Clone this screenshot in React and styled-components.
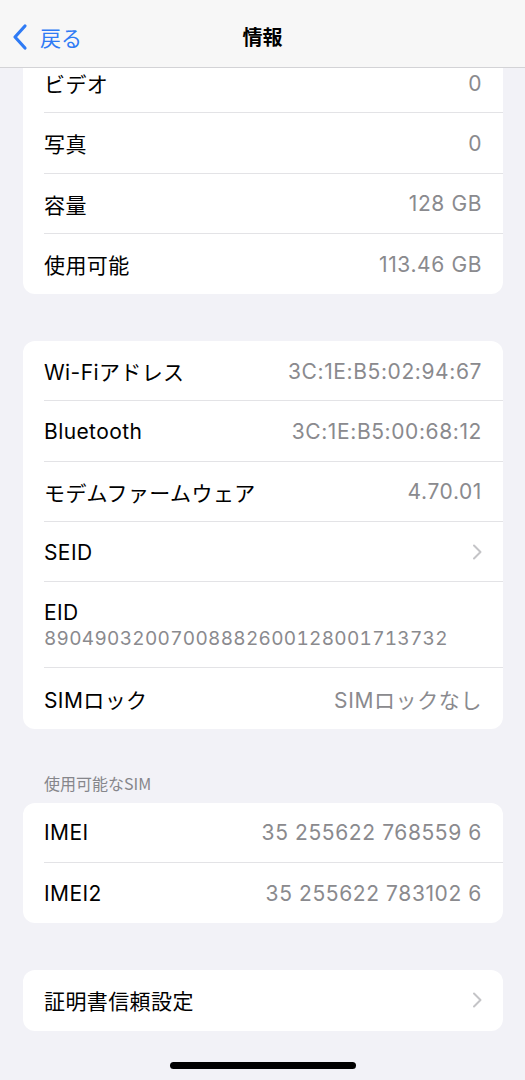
import React from "react";
import styled, { createGlobalStyle } from "styled-components";

const GlobalStyle = createGlobalStyle`
  html, body {
    margin: 0;
    padding: 0;
    background: #f2f2f7;
  }
  body {
    font-family: "Inter", "Noto Sans CJK JP", sans-serif;
    -webkit-font-smoothing: antialiased;
  }
`;

const Screen = styled.div`
  position: relative;
  width: 525px;
  height: 1080px;
  overflow: hidden;
  background: #f2f2f7;
`;

const NavBar = styled.div`
  position: absolute;
  top: 0;
  left: 0;
  right: 0;
  height: 67px;
  background: #f7f7f7;
  border-bottom: 1px solid #d3d3d6;
  z-index: 2;
`;

const BackButton = styled.div`
  position: absolute;
  left: 11px;
  top: 22px;
  display: flex;
  align-items: center;
  gap: 11px;
  color: #2f7bf5;
  font-size: 21px;
  font-family: "Noto Sans CJK JP", sans-serif;
`;

const NavTitle = styled.div`
  position: absolute;
  left: 0;
  right: 0;
  top: 22px;
  text-align: center;
  font-size: 20px;
  font-weight: 700;
  color: #000;
  font-family: "Noto Sans CJK JP", sans-serif;
`;

const Content = styled.div`
  display: flex;
  flex-direction: column;
  padding: 53px 22px 0 23px;
`;

const Card = styled.div`
  background: #fff;
  border-radius: 12px;
  overflow: hidden;
  margin-bottom: ${(p) => p.$gap || 0}px;
`;

const Row = styled.div`
  position: relative;
  display: flex;
  align-items: center;
  justify-content: space-between;
  height: ${(p) => p.$h || 60.3}px;
  padding: 0 21px 0 21px;
  box-sizing: border-box;

  &:not(:last-child)::after {
    content: "";
    position: absolute;
    left: 21px;
    right: 0;
    bottom: 0;
    height: 1px;
    background: #e3e3e6;
  }
`;

const StackRow = styled(Row)`
  flex-direction: column;
  align-items: flex-start;
  justify-content: center;
  gap: 2px;
`;

const Label = styled.span`
  font-size: 21px;
  color: #000;
  letter-spacing: 0.4px;
`;

const Value = styled.span`
  font-size: 21px;
  color: #8a8a8e;
  letter-spacing: 0.6px;
`;

const MonoValue = styled.span`
  font-size: 19px;
  color: #8a8a8e;
  font-variant-numeric: tabular-nums;
  letter-spacing: 0.3px;
`;

const SectionHeader = styled.div`
  font-size: 16px;
  line-height: 20px;
  color: #86868b;
  padding: 0 0 10px 21px;
  font-family: "Noto Sans CJK JP", sans-serif;
`;

const HomeBar = styled.div`
  align-self: center;
  width: 186px;
  height: 7px;
  border-radius: 4px;
  background: #000;
  margin-top: 31px;
  margin-left: -1px;
`;

const Chevron = ({ color = "#c4c4c7", w = 10, h = 16, sw = 2 }) => (
  <svg width={w} height={h} viewBox="0 0 10 16" fill="none">
    <path
      d="M2 1.5 L8.5 8 L2 14.5"
      stroke={color}
      strokeWidth={sw}
      strokeLinecap="round"
      strokeLinejoin="round"
    />
  </svg>
);

const BackChevron = () => (
  <svg width="18" height="28" viewBox="0 0 18 28" fill="none">
    <path
      d="M14 3 L4 14 L14 25"
      stroke="#2f7bf5"
      strokeWidth="3.2"
      strokeLinecap="round"
      strokeLinejoin="round"
    />
  </svg>
);

const App = () => {
  return (
    <>
      <GlobalStyle />
      <Screen>
        <NavBar>
          <BackButton>
            <BackChevron />
            <span>戻る</span>
          </BackButton>
          <NavTitle>情報</NavTitle>
        </NavBar>

        <Content>
          <Card $gap={47}>
            <Row>
              <Label>ビデオ</Label>
              <Value>0</Value>
            </Row>
            <Row>
              <Label>写真</Label>
              <Value>0</Value>
            </Row>
            <Row>
              <Label>容量</Label>
              <Value>128 GB</Value>
            </Row>
            <Row>
              <Label>使用可能</Label>
              <Value>113.46 GB</Value>
            </Row>
          </Card>

          <Card $gap={44}>
            <Row>
              <Label>Wi-Fiアドレス</Label>
              <Value>3C:1E:B5:02:94:67</Value>
            </Row>
            <Row>
              <Label>Bluetooth</Label>
              <Value>3C:1E:B5:00:68:12</Value>
            </Row>
            <Row>
              <Label>モデムファームウェア</Label>
              <Value>4.70.01</Value>
            </Row>
            <Row>
              <Label>SEID</Label>
              <Chevron />
            </Row>
            <StackRow $h={86}>
              <Label>EID</Label>
              <MonoValue>89049032007008882600128001713732</MonoValue>
            </StackRow>
            <Row>
              <Label>SIMロック</Label>
              <Value>SIMロックなし</Value>
            </Row>
          </Card>

          <SectionHeader>使用可能なSIM</SectionHeader>
          <Card $gap={47}>
            <Row>
              <Label>IMEI</Label>
              <Value>35 255622 768559 6</Value>
            </Row>
            <Row>
              <Label>IMEI2</Label>
              <Value>35 255622 783102 6</Value>
            </Row>
          </Card>

          <Card>
            <Row>
              <Label>証明書信頼設定</Label>
              <Chevron />
            </Row>
          </Card>

          <HomeBar />
        </Content>
      </Screen>
    </>
  );
};

export default App;
